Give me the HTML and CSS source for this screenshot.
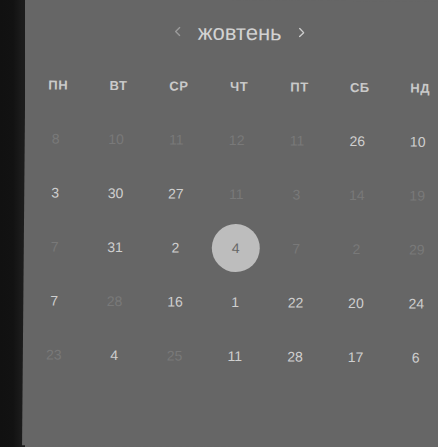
FILE: index.html
```html
<!DOCTYPE html>
<html lang="uk">
<head>
<meta charset="utf-8">
<title>Календар</title>
<link rel="stylesheet" href="styles.css">
</head>
<body>
<div class="stage">
  <div class="panel">
    <div class="inner">
      <div class="header">
        <span class="nav nav-prev"><svg width="6" height="10" viewBox="0 0 6 10"><polyline points="5,1 1,5 5,9" fill="none" stroke="currentColor" stroke-width="1.4" stroke-linecap="round" stroke-linejoin="round"/></svg></span>
        <span class="title">жовтень</span>
        <span class="nav nav-next"><svg width="6" height="10" viewBox="0 0 6 10"><polyline points="1,1 5,5 1,9" fill="none" stroke="currentColor" stroke-width="1.4" stroke-linecap="round" stroke-linejoin="round"/></svg></span>
      </div>
      <div class="weekdays">
        <span>ПН</span><span>ВТ</span><span>СР</span><span>ЧТ</span><span>ПТ</span><span>СБ</span><span>НД</span>
      </div>
      <div class="days">
        <span class="day muted">8</span><span class="day muted">10</span><span class="day muted">11</span><span class="day muted">12</span><span class="day muted">11</span><span class="day">26</span><span class="day">10</span>
        <span class="day">3</span><span class="day">30</span><span class="day">27</span><span class="day muted">11</span><span class="day muted">3</span><span class="day muted">14</span><span class="day muted">19</span>
        <span class="day muted">7</span><span class="day">31</span><span class="day">2</span><span class="day selected"><span class="dot">4</span></span><span class="day muted">7</span><span class="day muted">2</span><span class="day muted">29</span>
        <span class="day">7</span><span class="day muted">28</span><span class="day">16</span><span class="day">1</span><span class="day">22</span><span class="day">20</span><span class="day">24</span>
        <span class="day muted">23</span><span class="day">4</span><span class="day muted">25</span><span class="day">11</span><span class="day">28</span><span class="day">17</span><span class="day">6</span>
      </div>
    </div>
  </div>
</div>
</body>
</html>
```

FILE: styles.css
```css
html, body {
  margin: 0;
  padding: 0;
  width: 100%;
  height: 100%;
  overflow: hidden;
}

body {
  background: linear-gradient(to right, #111111 0, #121212 13px, #1c1c1c 22px, #1c1c1c 25px, #666666 25px);
  font-family: "Liberation Sans", Arial, sans-serif;
}

.stage {
  height: 447px;
  padding-left: 24px;
  overflow: hidden;
}

.panel {
  width: 414px;
  height: 447px;
  padding-top: 20px;
  box-sizing: border-box;
  background: #666666;
  transform: rotate(0.5deg);
  transform-origin: 207px 223px;
}

.inner {
  margin-left: 14px;
  width: 400px;
  display: flex;
  flex-direction: column;
}

.header {
  height: 26px;
  display: flex;
  align-items: center;
  justify-content: center;
  gap: 17px;
}

.title {
  font-size: 22px;
  line-height: 26px;
  color: #d2d2d2;
}

.nav {
  display: flex;
  width: 6px;
  height: 10px;
  margin-top: -3px;
}

.nav-prev {
  color: #9a9a9a;
}

.nav-next {
  color: #cccccc;
}

.weekdays {
  margin-top: 28px;
  display: grid;
  grid-template-columns: repeat(7, 38px);
  justify-content: space-between;
  height: 26px;
}

.weekdays span {
  text-align: center;
  font-size: 13px;
  font-weight: bold;
  line-height: 26px;
  color: #cacaca;
  letter-spacing: 0.5px;
}

.days {
  margin-top: 13px;
  display: grid;
  grid-template-columns: repeat(7, 38px);
  grid-auto-rows: 54px;
  justify-content: space-between;
}

.day {
  box-sizing: border-box;
  display: flex;
  align-items: center;
  justify-content: center;
  padding-right: 4px;
  font-size: 14px;
  color: #cfcfcf;
}

.day.muted {
  color: #797979;
}

.dot {
  flex: none;
  width: 48px;
  height: 48px;
  border-radius: 50%;
  background: #bdbdbd;
  color: #666666;
  display: flex;
  align-items: center;
  justify-content: center;
}
```
